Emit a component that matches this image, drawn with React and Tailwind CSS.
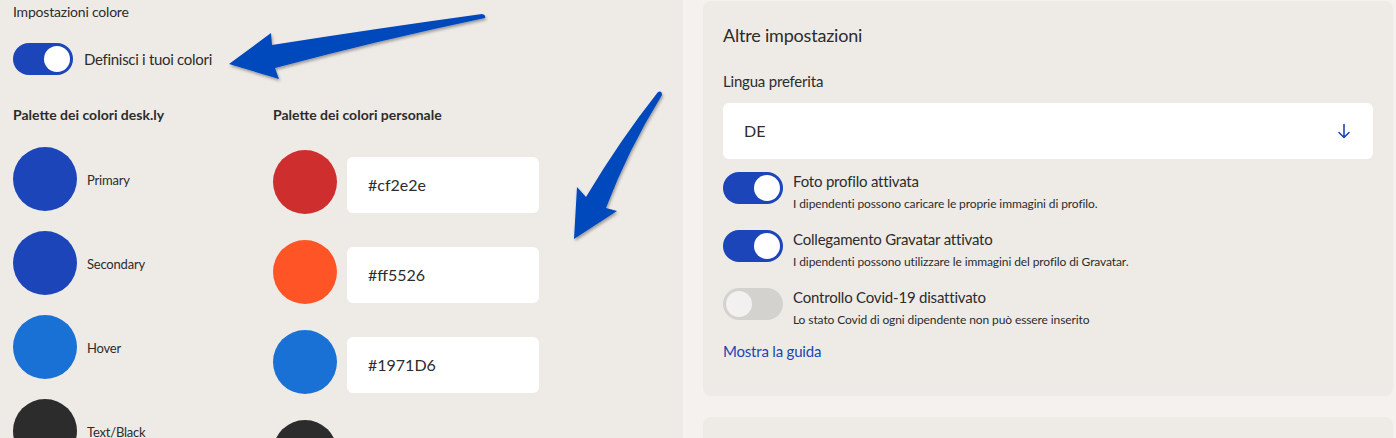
import React from "react";

const font = { fontFamily: "Lato, 'Open Sans', sans-serif" };

function Toggle({ on }) {
  return (
    <div
      className={
        "w-[60px] h-[32px] rounded-full flex items-center shrink-0 " +
        (on ? "bg-[#1b45b8] justify-end pr-[3px]" : "bg-[#d4d2cf] justify-start pl-[3px]")
      }
    >
      <div
        className={
          "w-[26px] h-[26px] rounded-full " +
          (on ? "bg-white" : "bg-[#f3f1ef]")
        }
      />
    </div>
  );
}

function SwatchLeft({ color, label }) {
  return (
    <div className="flex items-center h-[64px] mb-[20px]">
      <div className="w-[64px] h-[64px] rounded-full shrink-0" style={{ background: color }} />
      <span className="ml-[10px] mt-[3px] text-[13px] tracking-[-0.2px] text-[#2c2c2c]">{label}</span>
    </div>
  );
}

function SwatchRight({ color, hex }) {
  return (
    <div className="flex items-start h-[64px] mb-[26px]">
      <div className="w-[64px] h-[64px] rounded-full shrink-0" style={{ background: color }} />
      {hex && (
        <div className="ml-[10px] mt-[7px] w-[192px] h-[56px] bg-white rounded-[6px] flex items-center pl-[21px] text-[16px] text-[#2c2c2c]">
          {hex}
        </div>
      )}
    </div>
  );
}

function Row({ on, title, desc }) {
  return (
    <div className="flex items-start h-[58px]">
      <Toggle on={on} />
      <div className="ml-[10px] -mt-[2px]">
        <div className="text-[15px] leading-[22px] tracking-[-0.2px] text-[#2c2c2c]">{title}</div>
        <div className="text-[12px] leading-[18px] mt-[3px] tracking-[-0.1px] text-[#2c2c2c]">{desc}</div>
      </div>
    </div>
  );
}

export default function App() {
  return (
    <div className="relative w-[1396px] h-[438px] overflow-hidden bg-[#f4f1ee] flex" style={font}>
      {/* Left panel */}
      <div className="w-[683px] h-full bg-[#eeebe7] pl-[13px] pt-[2px]">
        <div className="text-[14px] leading-[20px] tracking-[-0.2px] text-[#2c2c2c]">Impostazioni colore</div>
        <div className="flex items-center mt-[21px]">
          <Toggle on />
          <span className="ml-[11px] text-[15px] tracking-[-0.3px] text-[#2c2c2c]">Definisci i tuoi colori</span>
        </div>
        <div className="flex mt-[30px]">
          <div className="w-[260px]">
            <div className="text-[14px] leading-[20px] font-bold text-[#2c2c2c]">Palette dei colori desk.ly</div>
            <div className="mt-[22px]">
              <SwatchLeft color="#1c45b9" label="Primary" />
              <SwatchLeft color="#1c45b9" label="Secondary" />
              <SwatchLeft color="#1971d6" label="Hover" />
              <SwatchLeft color="#2c2c2c" label="Text/Black" />
            </div>
          </div>
          <div>
            <div className="text-[14px] leading-[20px] font-bold text-[#2c2c2c]">Palette dei colori personale</div>
            <div className="mt-[25px]">
              <SwatchRight color="#cf2e2e" hex="#cf2e2e" />
              <SwatchRight color="#ff5526" hex="#ff5526" />
              <SwatchRight color="#1971d6" hex="#1971D6" />
              <SwatchRight color="#2c2c2c" />
            </div>
          </div>
        </div>
      </div>

      {/* Right column */}
      <div className="ml-[20px] w-[690px] flex flex-col">
        <div className="mt-[1px] h-[395px] rounded-lg bg-[#eeebe7] px-5 pt-5">
          <div className="text-[18px] leading-[28px] tracking-[-0.2px] text-[#2c2c2c]">Altre impostazioni</div>
          <div className="mt-[21px] text-[15px] leading-[22px] tracking-[-0.2px] text-[#2c2c2c]">Lingua preferita</div>
          <div className="mt-[11px] h-[56px] bg-white rounded-[6px] flex items-center justify-between pl-[21px] pr-[22px]">
            <span className="text-[16px] text-[#2c2c2c]">DE</span>
            <svg width="14" height="16" viewBox="0 0 14 16" fill="none" stroke="#1b45b8" strokeWidth="1.6" strokeLinecap="round" strokeLinejoin="round">
              <path d="M7 1.5v13M2 9.5l5 5 5-5" />
            </svg>
          </div>
          <div className="mt-[13px]">
            <Row on title="Foto profilo attivata" desc="I dipendenti possono caricare le proprie immagini di profilo." />
            <Row on title="Collegamento Gravatar attivato" desc="I dipendenti possono utilizzare le immagini del profilo di Gravatar." />
            <Row on={false} title="Controllo Covid-19 disattivato" desc="Lo stato Covid di ogni dipendente non può essere inserito" />
          </div>
          <div className="-mt-[6px] text-[15px] leading-[22px] tracking-[-0.2px] text-[#1b45b8]">Mostra la guida</div>
        </div>
        <div className="mt-[21px] flex-1 rounded-t-lg bg-[#eeebe7]" />
      </div>

      {/* Annotation arrows */}
      <svg className="absolute left-0 top-0 pointer-events-none" width="1396" height="438" viewBox="0 0 1396 438">
        <defs>
          <filter id="sh" x="-10%" y="-10%" width="120%" height="130%">
            <feDropShadow dx="1" dy="2" stdDeviation="1.5" floodColor="#000" floodOpacity="0.35" />
          </filter>
        </defs>
        <path
          d="M229 64 L271 33 L272 45 Q380 28 482 14 Q486 15 485 18 Q380 40 275 68 L279 79 Z"
          fill="#0249bd"
          filter="url(#sh)"
        />
        <path
          d="M574 239 L577 187 L586 197 Q620 140 658 92 Q662 90 662 95 Q628 150 606 208 L617 211 Z"
          fill="#0249bd"
          filter="url(#sh)"
        />
      </svg>
    </div>
  );
}
